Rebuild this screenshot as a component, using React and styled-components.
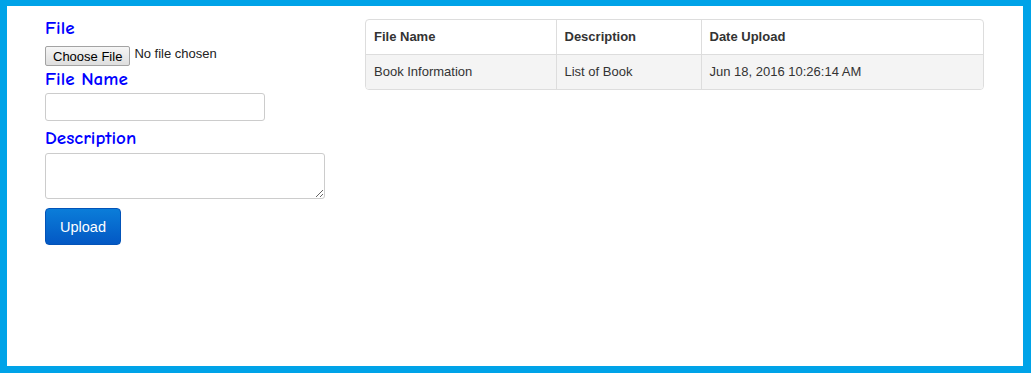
import React from 'react'
import styled, { createGlobalStyle } from 'styled-components'

const GlobalStyle = createGlobalStyle`
  body {
    margin: 0;
    font-family: "Liberation Sans", Arial, sans-serif;
    color: #333;
  }
`

const Frame = styled.div`
  box-sizing: border-box;
  width: 1031px;
  height: 373px;
  background: #fff;
  border-style: solid;
  border-color: #00a3e8;
  border-width: 6px 8px 7px 7px;
  display: flex;
  gap: 40px;
  padding: 0 0 0 38px;
`

const UploadForm = styled.form`
  width: 280px;
  display: flex;
  flex-direction: column;
  align-items: flex-start;
  padding-top: 10px;
`

const FieldLabel = styled.label`
  display: block;
  font-family: "Comic Sans MS", "Comic Neue", "Lato", sans-serif;
  font-size: 19px;
  font-weight: 600;
  line-height: 24px;
  color: #0000ff;
  margin-top: ${({ gap }) => gap || 0}px;
`

const FilePicker = styled.label`
  display: flex;
  align-items: center;
  gap: 4px;
  font-size: 13px;
  color: #222;
  margin-top: 6px;
  input {
    display: none;
  }
`

const FileButton = styled.span`
  box-sizing: border-box;
  height: 20px;
  padding: 0 7px;
  display: inline-flex;
  align-items: center;
  border: 1px solid #a3a3a3;
  border-radius: 2px;
  background: linear-gradient(#f6f6f6, #dedede);
  color: #000;
  font-size: 13px;
`

const FileStatus = styled.span`
  position: relative;
  top: -3px;
`

const TextInput = styled.input`
  box-sizing: border-box;
  width: 220px;
  height: 28px;
  margin-top: 2px;
  border: 1px solid #ccc;
  border-radius: 3px;
  outline: none;
`

const TextArea = styled.textarea`
  box-sizing: border-box;
  width: 280px;
  height: 46px;
  margin: 3px 0 0;
  border: 1px solid #ccc;
  border-radius: 3px;
  outline: none;
`

const SubmitButton = styled.button`
  box-sizing: border-box;
  margin-top: 9px;
  width: 76px;
  height: 37px;
  border: 1px solid #0353b8;
  border-radius: 4px;
  background: linear-gradient(#0b7dd9, #0358c4);
  color: #fff;
  font-family: "Liberation Sans", Arial, sans-serif;
  font-size: 14.5px;
`

const TableBox = styled.div`
  box-sizing: border-box;
  margin-top: 13px;
  width: 619px;
  align-self: flex-start;
  border: 1px solid #ddd;
  border-radius: 4px;
  overflow: hidden;
`

const Table = styled.table`
  width: 100%;
  table-layout: fixed;
  border-collapse: collapse;
  font-size: 13px;
  line-height: 18px;
`

const HeadCell = styled.th`
  box-sizing: border-box;
  text-align: left;
  font-weight: bold;
  padding: 8px;
  border-bottom: 1px solid #ddd;
  border-left: ${({ first }) => (first ? 'none' : '1px solid #ddd')};
  width: ${({ w }) => (w ? `${w}px` : 'auto')};
`

const Row = styled.tr`
  background: #f4f4f4;
`

const Cell = styled.td`
  padding: 8px;
  border-left: ${({ first }) => (first ? 'none' : '1px solid #ddd')};
`

const files = [
  { name: 'Book Information', description: 'List of Book', date: 'Jun 18, 2016 10:26:14 AM' },
]

export default function App() {
  return (
    <>
      <GlobalStyle />
      <Frame>
        <UploadForm onSubmit={e => e.preventDefault()}>
          <FieldLabel>File</FieldLabel>
          <FilePicker>
            <input type="file" />
            <FileButton>Choose File</FileButton>
            <FileStatus>No file chosen</FileStatus>
          </FilePicker>
          <FieldLabel gap={1}>File Name</FieldLabel>
          <TextInput type="text" />
          <FieldLabel gap={5}>Description</FieldLabel>
          <TextArea />
          <SubmitButton type="submit">Upload</SubmitButton>
        </UploadForm>
        <TableBox>
          <Table>
            <thead>
              <tr>
                <HeadCell first w={190}>File Name</HeadCell>
                <HeadCell w={145}>Description</HeadCell>
                <HeadCell>Date Upload</HeadCell>
              </tr>
            </thead>
            <tbody>
              {files.map(f => (
                <Row key={f.name}>
                  <Cell first>{f.name}</Cell>
                  <Cell>{f.description}</Cell>
                  <Cell>{f.date}</Cell>
                </Row>
              ))}
            </tbody>
          </Table>
        </TableBox>
      </Frame>
    </>
  )
}
